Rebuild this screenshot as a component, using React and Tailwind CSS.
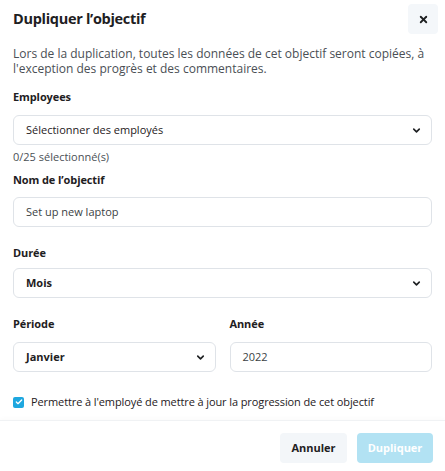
import { ChevronDown, X, Check } from 'lucide-react';

function Label({ children }) {
  return <div className="text-[11px] font-bold text-[#1e2022] leading-[14px] tracking-[-0.1px]">{children}</div>;
}

function SelectBox({ value, bold }) {
  return (
    <div className="flex items-center justify-between h-[30px] rounded-[6px] border border-[#dfe3e8] bg-white pl-[12px] pr-[9px]">
      <span className={`text-[11px] text-[#1e2022] ${bold ? 'font-bold' : ''}`}>{value}</span>
      <ChevronDown size={11} strokeWidth={3.5} className="text-[#1e2022]" />
    </div>
  );
}

function InputBox({ value }) {
  return (
    <div className="flex items-center h-[30px] rounded-[6px] border border-[#dfe3e8] bg-white px-[12px]">
      <span className="text-[11px] text-[#3b3f44]">{value}</span>
    </div>
  );
}

export default function App() {
  return (
    <div className="w-[445px] h-[471px] bg-white flex flex-col" style={{ fontFamily: '"Open Sans", sans-serif' }}>
      <div className="px-[13px] flex-1">
        {/* En-tête */}
        <div className="flex items-center justify-between pt-[4px]">
          <h1 className="text-[14.5px] font-bold text-[#1e2022] leading-[20px] tracking-[-0.3px]">Dupliquer l’objectif</h1>
          <button className="w-[30px] h-[30px] rounded-[4px] bg-[#f4f7fa] flex items-center justify-center -mr-[6px]">
            <X size={11} strokeWidth={4} className="text-[#1e2022]" />
          </button>
        </div>

        <p className="mt-[12px] text-[12px] leading-[15px] text-[#4a4f55]">
          Lors de la duplication, toutes les données de cet objectif seront copiées, à l'exception des progrès et des commentaires.
        </p>

        <div className="mt-[14px]">
          <Label>Employees</Label>
          <div className="mt-[11px]">
            <SelectBox value="Sélectionner des employés" />
          </div>
          <div className="mt-[5px] text-[11px] leading-[14px] text-[#4a4f55]">0/25 sélectionné(s)</div>
        </div>

        <div className="mt-[9px]">
          <Label>Nom de l’objectif</Label>
          <div className="mt-[10px]">
            <InputBox value="Set up new laptop" />
          </div>
        </div>

        <div className="mt-[19px]">
          <Label>Durée</Label>
          <div className="mt-[8px]">
            <SelectBox value="Mois" bold />
          </div>
        </div>

        <div className="mt-[19px] grid grid-cols-2 gap-[14px]">
          <div>
            <Label>Période</Label>
            <div className="mt-[11px]">
              <SelectBox value="Janvier" bold />
            </div>
          </div>
          <div>
            <Label>Année</Label>
            <div className="mt-[11px]">
              <InputBox value="2022" />
            </div>
          </div>
        </div>

        <label className="mt-[23px] flex items-center gap-[7px]">
          <span className="w-[11px] h-[11px] rounded-[2px] bg-[#1ea7df] flex items-center justify-center">
            <Check size={8} strokeWidth={4} className="text-white" />
          </span>
          <span className="text-[11px] leading-[14px] text-[#1e2022] tracking-[-0.1px]">Permettre à l'employé de mettre à jour la progression de cet objectif</span>
        </label>
      </div>

      {/* Pied */}
      <div className="border-t border-[#f0f2f4] flex justify-end gap-[10px] px-[12px] pt-[12px] pb-[8px] shadow-[0_-2px_4px_rgba(0,0,0,0.02)]">
        <button className="h-[30px] w-[67px] rounded-[4px] bg-[#f3f6f9] text-[11px] font-bold text-[#1e2022]">Annuler</button>
        <button disabled className="h-[30px] w-[76px] rounded-[4px] bg-[#b2e2f3] text-[11px] font-bold text-white">Dupliquer</button>
      </div>
    </div>
  );
}
